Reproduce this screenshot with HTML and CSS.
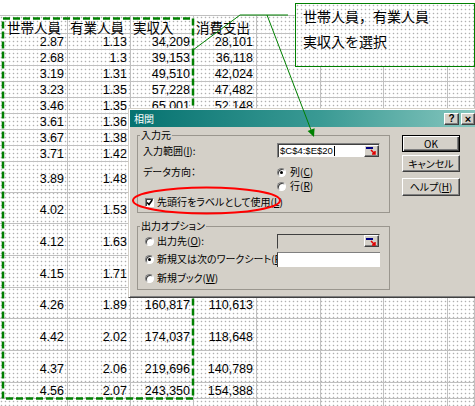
FILE: index.html
```html
<!DOCTYPE html>
<html lang="ja">
<head>
<meta charset="utf-8">
<title>相関</title>
<link rel="stylesheet" href="styles.css">
</head>
<body>
<div class="page">
  <div class="topstrip"></div>
  <div class="sheet">
    <div class="row hd"><span class="c">世帯人員</span><span class="c">有業人員</span><span class="c">実収入</span><span class="c">消費支出</span><span class="c"></span><span class="c"></span><span class="c"></span><span class="c"></span></div>
    <div class="row"><span class="c">2.87</span><span class="c">1.13</span><span class="c">34,209</span><span class="c">28,101</span><span class="c"></span><span class="c"></span><span class="c"></span><span class="c"></span></div>
    <div class="row"><span class="c">2.68</span><span class="c">1.3</span><span class="c">39,153</span><span class="c">36,118</span><span class="c"></span><span class="c"></span><span class="c"></span><span class="c"></span></div>
    <div class="row"><span class="c">3.19</span><span class="c">1.31</span><span class="c">49,510</span><span class="c">42,024</span><span class="c"></span><span class="c"></span><span class="c"></span><span class="c"></span></div>
    <div class="row"><span class="c">3.23</span><span class="c">1.35</span><span class="c">57,228</span><span class="c">47,482</span><span class="c"></span><span class="c"></span><span class="c"></span><span class="c"></span></div>
    <div class="row"><span class="c">3.46</span><span class="c">1.35</span><span class="c">65,001</span><span class="c">52,148</span><span class="c"></span><span class="c"></span><span class="c"></span><span class="c"></span></div>
    <div class="row"><span class="c">3.61</span><span class="c">1.36</span><span class="c"></span><span class="c"></span><span class="c"></span><span class="c"></span><span class="c"></span><span class="c"></span></div>
    <div class="row"><span class="c">3.67</span><span class="c">1.38</span><span class="c"></span><span class="c"></span><span class="c"></span><span class="c"></span><span class="c"></span><span class="c"></span></div>
    <div class="row"><span class="c">3.71</span><span class="c">1.42</span><span class="c"></span><span class="c"></span><span class="c"></span><span class="c"></span><span class="c"></span><span class="c"></span></div>
    <div class="row t1"><span class="c">3.89</span><span class="c">1.48</span><span class="c"></span><span class="c"></span><span class="c"></span><span class="c"></span><span class="c"></span><span class="c"></span></div>
    <div class="row t1"><span class="c">4.02</span><span class="c">1.53</span><span class="c"></span><span class="c"></span><span class="c"></span><span class="c"></span><span class="c"></span><span class="c"></span></div>
    <div class="row t2"><span class="c">4.12</span><span class="c">1.63</span><span class="c"></span><span class="c"></span><span class="c"></span><span class="c"></span><span class="c"></span><span class="c"></span></div>
    <div class="row t2"><span class="c">4.15</span><span class="c">1.71</span><span class="c"></span><span class="c"></span><span class="c"></span><span class="c"></span><span class="c"></span><span class="c"></span></div>
    <div class="row t1"><span class="c">4.26</span><span class="c">1.89</span><span class="c">160,817</span><span class="c">110,613</span><span class="c"></span><span class="c"></span><span class="c"></span><span class="c"></span></div>
    <div class="row t2"><span class="c">4.42</span><span class="c">2.02</span><span class="c">174,037</span><span class="c">118,648</span><span class="c"></span><span class="c"></span><span class="c"></span><span class="c"></span></div>
    <div class="row t2"><span class="c">4.37</span><span class="c">2.06</span><span class="c">219,696</span><span class="c">140,789</span><span class="c"></span><span class="c"></span><span class="c"></span><span class="c"></span></div>
    <div class="row"><span class="c">4.56</span><span class="c">2.07</span><span class="c">243,350</span><span class="c">154,388</span><span class="c"></span><span class="c"></span><span class="c"></span><span class="c"></span></div>
    <div class="row"><span class="c"></span><span class="c"></span><span class="c"></span><span class="c"></span><span class="c"></span><span class="c"></span><span class="c"></span><span class="c"></span></div>
  </div>

  <svg class="selection" width="475" height="406" viewBox="0 0 475 406">
    <rect x="3" y="18.5" width="190" height="380" fill="none" stroke="#008000" stroke-width="2.5" stroke-dasharray="7 3"/>
  </svg>

  <div class="callout">世帯人員，有業人員<br>実収入を選択</div>

  <div class="dialog">
    <div class="titlebar">
      <span class="ttl">相関</span>
      <span class="tbtn q">?</span>
      <span class="tbtn x">×</span>
    </div>
    <div class="dbody">
      <div class="groups">
        <fieldset class="grp g1">
          <legend>入力元</legend>
          <div class="frow r1">
            <span class="lbl">入力範囲(<u>I</u>):</span>
            <span class="inp inp1"><span class="val">$C$4:$E$20</span><span class="caret"></span><span class="refbtn"><svg width="13" height="9" viewBox="0 0 13 9"><rect x="1" y="1" width="7" height="2" fill="#000080"/><path d="M6 4 L10 8 M10 5 L10 8 L7 8" stroke="#e00000" stroke-width="1.5" fill="none"/></svg></span></span>
          </div>
          <div class="frow dir">
            <span class="lbl">データ方向：</span>
            <div class="radios">
              <div class="opt"><span class="radio on"></span>列(<u>C</u>)</div>
              <div class="opt"><span class="radio"></span>行(<u>R</u>)</div>
            </div>
          </div>
          <div class="frow chk">
            <span class="checkbox"><svg width="7" height="7" viewBox="0 0 7 7"><path d="M1 3.5 L3 5.5 L6.2 1" stroke="#000" stroke-width="1.6" fill="none"/></svg></span>先頭行をラベルとして使用(<u>L</u>)
          </div>
        </fieldset>
        <fieldset class="grp g2">
          <legend>出力オプション</legend>
          <div class="frow o1">
            <span class="lbl"><span class="radio"></span>出力先(<u>O</u>):</span>
            <span class="inp inp2"><span class="spacer"></span><span class="refbtn"><svg width="13" height="9" viewBox="0 0 13 9"><rect x="1" y="1" width="7" height="2" fill="#000080"/><path d="M6 4 L10 8 M10 5 L10 8 L7 8" stroke="#e00000" stroke-width="1.5" fill="none"/></svg></span></span>
          </div>
          <div class="frow o2">
            <span class="lbl clip"><span class="radio on"></span>新規又は次のワークシート(<u>P</u>):</span>
            <span class="inp inp3"></span>
          </div>
          <div class="frow o3">
            <span class="lbl"><span class="radio"></span>新規ブック(<u>W</u>)</span>
          </div>
        </fieldset>
      </div>
      <div class="btns">
        <div class="btn def">OK</div>
        <div class="btn">キャンセル</div>
        <div class="btn help">ヘルプ(<u>H</u>)</div>
      </div>
    </div>
  </div>

  <svg class="annot" width="475" height="406" viewBox="0 0 475 406">
    <polyline points="193,50 240,15 288,15" fill="none" stroke="#008000" stroke-width="1"/>
    <line x1="267" y1="15" x2="311" y2="130" stroke="#008000" stroke-width="1"/>
    <polygon points="314,137 314.6,128.2 307.6,130.9" fill="#008000"/>
    <ellipse cx="206.5" cy="200.5" rx="73.5" ry="13" fill="none" stroke="#ff0000" stroke-width="2"/>
  </svg>
</div>
</body>
</html>
```

FILE: styles.css
```css
* { box-sizing: border-box; }
html, body { margin: 0; padding: 0; }
body {
  width: 475px;
  height: 406px;
  overflow: hidden;
  background: #fff;
  font-family: "Liberation Sans", Arial, sans-serif;
}
.page {
  position: relative;
  width: 475px;
  height: 406px;
  overflow: hidden;
}
.topstrip { height: 15px; background: #fff; }

/* spreadsheet */
.sheet {
  border-top: 1px solid #c0c0c0;
  background-color: #fff;
  background-image: radial-gradient(circle at 1.5px 1.5px, #b0b0b0 0.6px, rgba(176,176,176,0) 1.1px);
  background-size: 4px 4px;
}
.row {
  display: flex;
  height: 16px;
  border-bottom: 1px solid #c0c0c0;
}
.row.hd { height: 18px; }
.row.t1 { height: 31px; }
.row.t2 { height: 32px; }
.c {
  flex: none;
  display: flex;
  align-items: center;
  justify-content: flex-end;
  padding-right: 3px;
  border-right: 1px solid #c0c0c0;
  font-size: 12.5px;
  line-height: 14px;
  color: #000;
  white-space: nowrap;
}
.c:nth-child(1) { width: 68px; }
.c:nth-child(2), .c:nth-child(3), .c:nth-child(4), .c:nth-child(6) { width: 63px; }
.c:nth-child(5), .c:nth-child(7) { width: 64px; }
.c:nth-child(8) { flex: 1; }
.hd .c {
  justify-content: flex-start;
  padding: 4px 0 0 2px;
  font-family: "Noto Sans CJK JP", sans-serif;
  font-size: 13.5px;
}
.hd .c:first-child { padding-left: 7px; }
.t1 .c, .t2 .c { padding-top: 4px; }
.row:not(.hd):not(.t1):not(.t2) .c { padding-top: 1px; }

.selection, .annot {
  position: absolute;
  left: 0;
  top: 0;
  pointer-events: none;
}

/* callout */
.callout {
  position: absolute;
  left: 295px;
  top: 3px;
  width: 180px;
  height: 64px;
  border: 1px solid #008000;
  background-color: #fff;
  background-image: radial-gradient(circle at 1.5px 1.5px, #b0b0b0 0.6px, rgba(176,176,176,0) 1.1px);
  background-size: 4px 4px;
  padding: 0 0 0 7px;
  font-family: "Noto Sans CJK JP", sans-serif;
  font-size: 14px;
  line-height: 25px;
  color: #000;
}

/* dialog */
.dialog {
  position: absolute;
  left: 128px;
  top: 108px;
  width: 350px;
  height: 190px;
  background: #d4d0c8;
  border: 1px solid;
  border-color: #d4d0c8 #404040 #404040 #d4d0c8;
  box-shadow: inset 1px 1px #fff, inset -1px -1px #808080;
  padding: 1px;
  font-family: "Noto Sans CJK JP", sans-serif;
  font-size: 10px;
  font-feature-settings: "palt";
  color: #000;
}
.titlebar {
  height: 17px;
  display: flex;
  align-items: center;
  padding: 0 1px 0 4px;
  background: linear-gradient(90deg, #067270 0%, #3a9a94 55%, #86c6be 100%);
  color: #fff;
}
.ttl { flex: 1; font-size: 10px; line-height: 13px; }
.tbtn {
  height: 12px;
  display: flex;
  align-items: center;
  justify-content: center;
  background: #d4d0c8;
  border: 1px solid;
  border-color: #fff #404040 #404040 #fff;
  box-shadow: inset -1px -1px #808080;
  color: #000;
  font-family: "Liberation Sans", Arial, sans-serif;
  font-weight: bold;
  font-size: 10px;
  line-height: 10px;
}
.tbtn.q { width: 15px; margin-right: 2px; }
.tbtn.x { width: 14px; font-size: 11px; }

.dbody {
  display: flex;
  gap: 12px;
  padding: 2px 0 0 7px;
}
.groups { width: 253px; flex: none; }
.grp {
  margin: 0;
  min-width: 0;
  border: 1px solid #9a968e;
  padding: 2px 9px 3px 5px;
}
.grp legend {
  padding: 0 1px;
  margin-left: -3px;
  font-size: 10px;
  line-height: 12px;
}
.g2 { margin-top: 7px; padding-top: 1px; }

.frow {
  display: flex;
  align-items: center;
  line-height: 14px;
  white-space: nowrap;
}
.lbl {
  flex: 1 1 auto;
  min-width: 0;
  display: flex;
  align-items: center;
}
.lbl.clip { overflow: hidden; height: 16px; }
.r1 { height: 15px; }
.dir { margin-top: 7px; align-items: flex-start; }
.dir .lbl { height: 14px; }
.radios { width: 103px; flex: none; }
.opt { display: flex; align-items: center; height: 14px; }
.opt .radio { margin-right: 4px; }
.chk { margin-top: 2px; height: 14px; padding-left: 2px; }

.o1 { height: 16px; padding-left: 2px; }
.o2 { height: 16px; margin-top: 2px; padding-left: 2px; }
.o3 { height: 16px; margin-top: 3px; padding-left: 2px; }
.g2 .lbl .radio { margin-right: 3px; }

.radio {
  flex: none;
  position: relative;
  display: inline-block;
  width: 9px;
  height: 9px;
  border-radius: 50%;
  background: #fff;
  border: 1px solid;
  border-color: #808080 #fff #fff #808080;
  box-shadow: inset 1px 1px #404040;
}
.radio.on::after {
  content: "";
  position: absolute;
  left: 2px;
  top: 2px;
  width: 3px;
  height: 3px;
  border-radius: 50%;
  background: #000;
}
.checkbox {
  flex: none;
  display: inline-flex;
  align-items: center;
  justify-content: center;
  width: 9px;
  height: 9px;
  margin-right: 3px;
  background: #fff;
  border: 1px solid;
  border-color: #808080 #fff #fff #808080;
  box-shadow: inset 1px 1px #404040;
}

.inp {
  flex: none;
  width: 103px;
  display: flex;
  align-items: center;
}
.inp1 {
  height: 15px;
  background: #fff;
  border: 1px solid;
  border-color: #808080 #d4d0c8 #d4d0c8 #808080;
  box-shadow: inset 1px 1px #404040;
  padding-left: 2px;
}
.val {
  flex: none;
  font-family: "Liberation Sans", Arial, sans-serif;
  font-size: 9.5px;
  line-height: 11px;
  font-feature-settings: normal;
}
.caret { flex: none; width: 1px; height: 10px; background: #000; margin-left: 1px; }
.inp2 {
  height: 15px;
  background: #d4d0c8;
  border: 1px solid;
  border-color: #404040 #d4d0c8 #d4d0c8 #404040;
}
.spacer { flex: 1; }
.refbtn {
  margin-left: auto;
  flex: none;
  width: 15px;
  height: 12px;
  display: flex;
  align-items: center;
  justify-content: center;
  background: #d4d0c8;
  border: 1px solid;
  border-color: #fff #404040 #404040 #fff;
  box-shadow: inset -1px -1px #808080;
}
.inp3 {
  height: 15px;
  background: #fff;
  border-left: 1px solid #404040;
  border-top: 1px solid #808080;
}

.btns {
  width: 58px;
  flex: none;
  display: flex;
  flex-direction: column;
  padding-top: 6px;
}
.btn {
  height: 17px;
  margin-bottom: 3px;
  display: flex;
  align-items: center;
  justify-content: center;
  background: #d4d0c8;
  border: 1px solid;
  border-color: #fff #404040 #404040 #fff;
  box-shadow: inset -1px -1px #808080;
  font-size: 10px;
  line-height: 12px;
}
.btn.def {
  border-color: #000;
  box-shadow: inset 1px 1px #fff, inset -1px -1px #404040, inset -2px -2px #808080;
}
.btn.help { height: 18px; margin-top: 3px; }
u { text-decoration: underline; text-underline-offset: 1px; }
```
